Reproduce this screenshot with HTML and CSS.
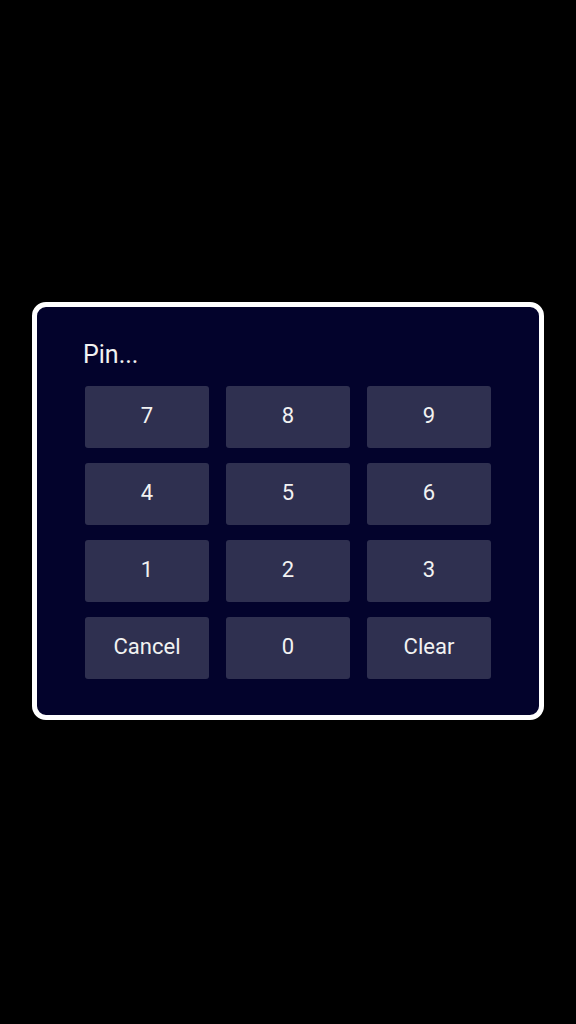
FILE: index.html
```html
<!DOCTYPE html>
<html>
<head>
<meta charset="utf-8">
<link rel="stylesheet" href="styles.css">
</head>
<body>
<div class="screen">
  <div class="dialog">
    <div class="title">Pin...</div>
    <div class="keypad">
      <div class="key">7</div>
      <div class="key">8</div>
      <div class="key">9</div>
      <div class="key">4</div>
      <div class="key">5</div>
      <div class="key">6</div>
      <div class="key">1</div>
      <div class="key">2</div>
      <div class="key">3</div>
      <div class="key">Cancel</div>
      <div class="key">0</div>
      <div class="key">Clear</div>
    </div>
  </div>
</div>
</body>
</html>
```

FILE: styles.css
```css
html, body {
  margin: 0;
  padding: 0;
  background: #000;
}
.screen {
  width: 576px;
  height: 1024px;
  padding-top: 302px;
  padding-left: 32px;
  box-sizing: border-box;
  font-family: Roboto, "Liberation Sans", sans-serif;
}
.dialog {
  width: 512px;
  height: 418px;
  box-sizing: border-box;
  border: 5px solid #ffffff;
  border-radius: 14px;
  background: #03032c;
  padding: 33px 48px 0 48px;
}
.title {
  color: #f2f2f2;
  font-size: 25px;
  line-height: 29px;
  margin-left: -2px;
  margin-bottom: 17px;
}
.keypad {
  display: grid;
  grid-template-columns: repeat(3, 124px);
  grid-auto-rows: 62px;
  column-gap: 17px;
  row-gap: 15px;
}
.key {
  background: #2f3050;
  border-radius: 3px;
  color: #f2f2f2;
  font-size: 22px;
  padding-bottom: 3px;
  box-sizing: border-box;
  display: flex;
  align-items: center;
  justify-content: center;
}
```
